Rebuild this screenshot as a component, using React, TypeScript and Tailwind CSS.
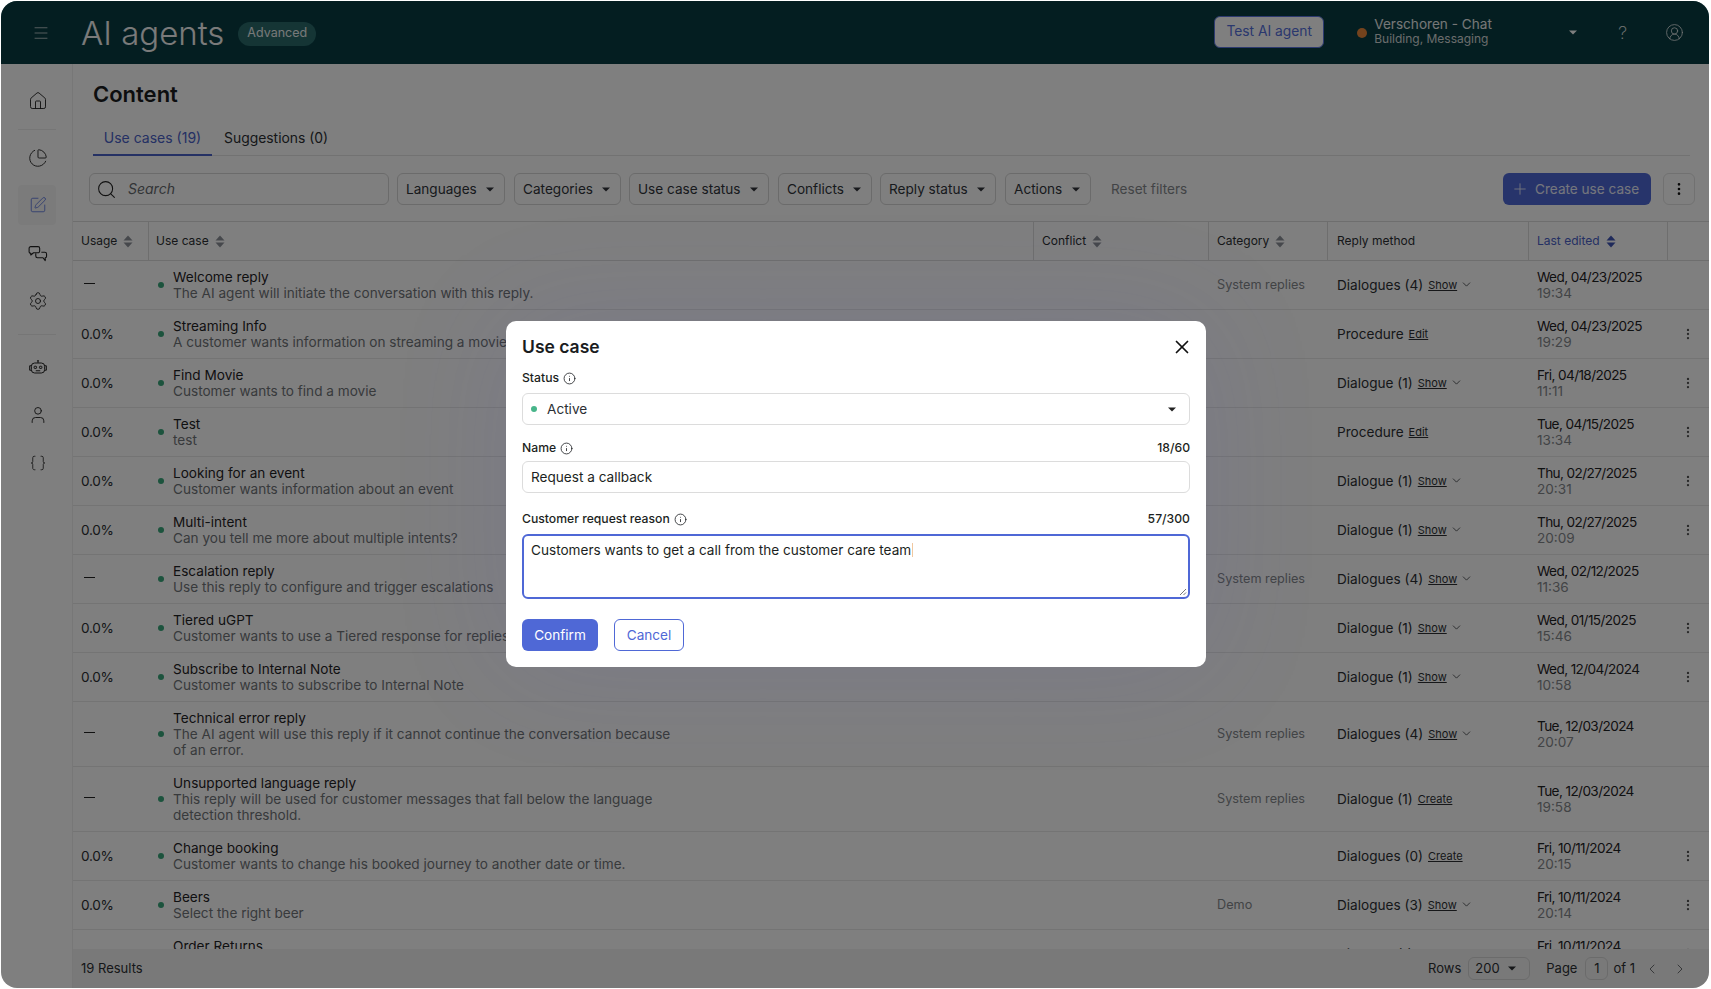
import {
  Braces,
  ChartPie,
  ChevronDown,
  ChevronLeft,
  ChevronRight,
  CircleUserRound,
  EllipsisVertical,
  Home,
  Info,
  Menu,
  Plus,
  Search,
  Settings,
  SquarePen,
  User,
  X,
} from "lucide-react";

type Row = {
  usage: string;
  name: string;
  desc: string;
  desc2?: string;
  category?: string;
  reply: string;
  link: string;
  chevron?: boolean;
  date: string;
  time: string;
  menu?: boolean;
  tall?: boolean;
};

const rows: Row[] = [
  { usage: "—", name: "Welcome reply", desc: "The AI agent will initiate the conversation with this reply.", category: "System replies", reply: "Dialogues (4)", link: "Show", chevron: true, date: "Wed, 04/23/2025", time: "19:34" },
  { usage: "0.0%", name: "Streaming Info", desc: "A customer wants information on streaming a movie", reply: "Procedure", link: "Edit", date: "Wed, 04/23/2025", time: "19:29", menu: true },
  { usage: "0.0%", name: "Find Movie", desc: "Customer wants to find a movie", reply: "Dialogue (1)", link: "Show", chevron: true, date: "Fri, 04/18/2025", time: "11:11", menu: true },
  { usage: "0.0%", name: "Test", desc: "test", reply: "Procedure", link: "Edit", date: "Tue, 04/15/2025", time: "13:34", menu: true },
  { usage: "0.0%", name: "Looking for an event", desc: "Customer wants information about an event", reply: "Dialogue (1)", link: "Show", chevron: true, date: "Thu, 02/27/2025", time: "20:31", menu: true },
  { usage: "0.0%", name: "Multi-intent", desc: "Can you tell me more about multiple intents?", reply: "Dialogue (1)", link: "Show", chevron: true, date: "Thu, 02/27/2025", time: "20:09", menu: true },
  { usage: "—", name: "Escalation reply", desc: "Use this reply to configure and trigger escalations", category: "System replies", reply: "Dialogues (4)", link: "Show", chevron: true, date: "Wed, 02/12/2025", time: "11:36" },
  { usage: "0.0%", name: "Tiered uGPT", desc: "Customer wants to use a Tiered response for replies", reply: "Dialogue (1)", link: "Show", chevron: true, date: "Wed, 01/15/2025", time: "15:46", menu: true },
  { usage: "0.0%", name: "Subscribe to Internal Note", desc: "Customer wants to subscribe to Internal Note", reply: "Dialogue (1)", link: "Show", chevron: true, date: "Wed, 12/04/2024", time: "10:58", menu: true },
  { usage: "—", name: "Technical error reply", desc: "The AI agent will use this reply if it cannot continue the conversation because", desc2: "of an error.", category: "System replies", reply: "Dialogues (4)", link: "Show", chevron: true, date: "Tue, 12/03/2024", time: "20:07", tall: true },
  { usage: "—", name: "Unsupported language reply", desc: "This reply will be used for customer messages that fall below the language", desc2: "detection threshold.", category: "System replies", reply: "Dialogue (1)", link: "Create", date: "Tue, 12/03/2024", time: "19:58", tall: true },
  { usage: "0.0%", name: "Change booking", desc: "Customer wants to change his booked journey to another date or time.", reply: "Dialogues (0)", link: "Create", date: "Fri, 10/11/2024", time: "20:15", menu: true },
  { usage: "0.0%", name: "Beers", desc: "Select the right beer", category: "Demo", reply: "Dialogues (3)", link: "Show", chevron: true, date: "Fri, 10/11/2024", time: "20:14", menu: true },
  { usage: "0.0%", name: "Order Returns", desc: "Customer wants to return an order", reply: "Dialogue (1)", link: "Show", chevron: true, date: "Fri, 10/11/2024", time: "20:10", menu: true },
];

const gridCols = "grid grid-cols-[76px_885px_175px_119px_201px_139px_1fr]";

function Caret({ className = "" }: { className?: string }) {
  return (
    <svg width="8" height="5" viewBox="0 0 8 5" className={className}>
      <path d="M0 0.5h8L4 4.5z" fill="currentColor" />
    </svg>
  );
}

function SortIcon({ active }: { active?: boolean }) {
  return (
    <svg width="10" height="13" viewBox="0 0 10 13" className="ml-[6px]">
      <path d="M5 0.5L9.5 5.5H0.5z" fill={active ? "#3f55b5" : "#8d9199"} />
      <path d="M5 12.5L0.5 7.5H9.5z" fill={active ? "#3f55b5" : "#8d9199"} />
    </svg>
  );
}

function ChatIcon() {
  return (
    <svg width="20" height="20" viewBox="0 0 18 18" fill="none" stroke="#222" strokeWidth="1" strokeLinejoin="round" className="translate-y-[2px]">
      <path d="M2.5 1.5h6.5a1.5 1.5 0 0 1 1.5 1.5v2.5a1.5 1.5 0 0 1-1.5 1.5H5L2.5 9V7.4A1.5 1.5 0 0 1 1 5.5V3a1.5 1.5 0 0 1 1.5-1.5z" />
      <path d="M7 7.5v2.5a1.5 1.5 0 0 0 1.5 1.5h5l2 2.5v-2.5a1.5 1.5 0 0 0 1.2-1.5V8a1.5 1.5 0 0 0-1.5-1.5h-3.2" />
    </svg>
  );
}

function RobotIcon() {
  return (
    <svg width="20" height="20" viewBox="0 0 18 18" fill="none" stroke="#222" strokeWidth="0.9" strokeLinejoin="round">
      <rect x="3" y="4.5" width="12" height="9" rx="3" />
      <path d="M3 7H1.5v4H3M15 7h1.5v4H15M9 4.5V3" />
      <circle cx="9" cy="2.6" r="0.5" />
      <rect x="5.5" y="7.4" width="2.2" height="2" rx="0.6" />
      <rect x="10.3" y="7.4" width="2.2" height="2" rx="0.6" />
      <path d="M7 11.5h4" />
    </svg>
  );
}

function FilterButton({ label, className }: { label: string; className: string }) {
  return (
    <button className={`flex h-8 items-center justify-between rounded-md border border-[#d6d6d6] pl-[8px] pr-[10px] text-[13.6px] text-[#30343a] ${className}`}>
      <span>{label}</span>
      <Caret />
    </button>
  );
}

function SideItem({ children, active }: { children: React.ReactNode; active?: boolean }) {
  return (
    <div className={`flex h-10 w-[38px] items-center justify-center rounded pl-[2px] ${active ? "bg-[#f7f7f7]" : ""}`}>
      {children}
    </div>
  );
}

function TableRow({ row }: { row: Row }) {
  return (
    <div className={`${gridCols} ${row.tall ? "h-[65px]" : "h-[49px]"} items-center border-b border-[#e8e8e8] pb-px text-[13.6px] leading-4 text-[#2c2f33]`}>
      <div className="pl-2 tracking-[-0.3px]">
        {row.usage === "—" ? <div className="mb-[3px] ml-[3px] h-px w-[11px] bg-[#222]" /> : row.usage}
      </div>
      <div className="flex items-center">
        <span className="ml-[9px] h-[6px] w-[6px] rounded-full bg-[#38a77a]" />
        <div className="ml-[9px]">
          <div className="text-[#1f2225]">{row.name}</div>
          <div className="text-[#707478]">{row.desc}</div>
          {row.desc2 && <div className="text-[#707478]">{row.desc2}</div>}
        </div>
      </div>
      <div />
      <div className="pl-[8px] text-[12.7px] text-[#85888c]">{row.category}</div>
      <div className="flex items-center pl-[9px]">
        <span>{row.reply}</span>
        <span className="ml-[5px] text-[11px] underline">{row.link}</span>
        {row.chevron && <ChevronDown size={13} strokeWidth={1.4} className="ml-[3px]" />}
      </div>
      <div className="pl-[8px]">
        <div className="tracking-[-0.6px] text-[#1f2225]">{row.date}</div>
        <div className="text-[#85888c]">{row.time}</div>
      </div>
      <div className="flex justify-center pr-[2px]">
        {row.menu && <EllipsisVertical size={14} color="#555" />}
      </div>
    </div>
  );
}

function FieldLabel({ label, count }: { label: string; count?: string }) {
  return (
    <div className="flex h-4 items-center justify-between text-[12.2px] font-medium text-[#1c1f22]">
      <span className="flex items-center gap-[4px]">
        {label}
        <Info size={13} strokeWidth={1.5} />
      </span>
      {count && <span>{count}</span>}
    </div>
  );
}

export default function App() {
  return (
    <div className="h-[989px] w-[1711px] overflow-hidden bg-white pb-px pl-px pr-[2px] pt-px font-['Inter',sans-serif]">
      <div className="relative flex h-full flex-col overflow-hidden rounded-2xl">
        {/* Top bar */}
        <header className="flex h-[63px] shrink-0 items-center bg-[#083d43] text-white">
          <Menu size={18} strokeWidth={1} className="ml-[31px] text-[#dfe3e4]" />
          <h1 className="ml-[31px] mt-[2px] text-[33px] font-light leading-none text-[#f5f5f5]">AI agents</h1>
          <span className="ml-[14px] mt-[2px] flex h-6 w-[78px] items-center justify-center rounded-full bg-[#2a6a6b] text-[12.5px] text-[#eef2f2]">Advanced</span>
          <div className="mb-[2px] ml-auto flex h-[32px] w-[110px] items-center justify-center rounded-md border border-[#5a75e0] bg-white text-[13.8px] text-[#5570dc]">
            Test AI agent
          </div>
          <span className="ml-[33px] h-[10px] w-[10px] rounded-full bg-[#e9863a]" />
          <div className="ml-[7px] w-[195px] leading-none">
            <div className="text-[13.6px] text-[#eceeee]">Verschoren - Chat</div>
            <div className="-mt-[1px] text-xs text-[#d5d9d9]">Building, Messaging</div>
          </div>
          <Caret className="text-white" />
          <span className="ml-[41px] text-lg font-extralight leading-none text-[#eceeee]">?</span>
          <CircleUserRound size={19} strokeWidth={1} className="ml-[38px] mr-[25px] text-[#eceeee]" />
        </header>

        <div className="flex min-h-0 flex-1 bg-white">
          {/* Sidebar */}
          <aside className="flex w-[72px] shrink-0 flex-col items-center border-r border-[#eeeeee] bg-[#ffffff] pt-[17px]">
            <SideItem><Home size={20} strokeWidth={1.1} color="#222" /></SideItem>
            <div className="my-[8px] h-px w-[38px] bg-[#ececec]" />
            <SideItem><ChartPie size={20} strokeWidth={1.1} color="#222" /></SideItem>
            <div className="mt-[7px]" />
            <SideItem active><SquarePen size={18} strokeWidth={1.1} color="#5570dc" /></SideItem>
            <div className="mt-2" />
            <SideItem><ChatIcon /></SideItem>
            <div className="mt-2" />
            <SideItem><Settings size={20} strokeWidth={1.1} color="#222" /></SideItem>
            <div className="my-[13px] h-px w-[38px] bg-[#ececec]" />
            <SideItem><RobotIcon /></SideItem>
            <div className="mt-[7px]" />
            <SideItem><User size={20} strokeWidth={1.1} color="#222" /></SideItem>
            <div className="mt-2" />
            <SideItem><Braces size={18} strokeWidth={1.1} color="#222" /></SideItem>
          </aside>

          {/* Content */}
          <main className="flex min-w-0 flex-1 flex-col">
            <h2 className="ml-5 mt-4 text-[22px] font-semibold leading-7 text-[#1a1c1e]">Content</h2>
            <div className="ml-5 mr-[19px] mt-[10px] flex h-[38px] border-b border-[#e4e4e4] text-sm">
              <div className="flex h-[38px] w-[119px] items-center justify-center border-b-2 border-[#4a62c8] pt-[3px] text-[#4a62c8]">Use cases (19)</div>
              <div className="ml-[12px] flex h-[37px] items-center pt-[4px] text-[13.9px] text-[#2c2f33]">Suggestions (0)</div>
            </div>

            <div className="ml-4 mr-[14px] mt-[17px] flex h-8 items-center">
              <div className="flex h-8 w-[300px] items-center rounded-md border border-[#d6d6d6] pl-[6px] text-sm">
                <Search size={21} strokeWidth={1.2} color="#222" />
                <span className="ml-[11px] italic text-[#666a6e]">Search</span>
              </div>
              <FilterButton label="Languages" className="ml-2 w-[108px]" />
              <FilterButton label="Categories" className="ml-[9px] w-[107px]" />
              <FilterButton label="Use case status" className="ml-2 w-[140px]" />
              <FilterButton label="Conflicts" className="ml-[9px] w-[94px]" />
              <FilterButton label="Reply status" className="ml-2 w-[116px]" />
              <FilterButton label="Actions" className="ml-[9px] w-[86px]" />
              <span className="ml-5 text-[13.6px] text-[#85888c]">Reset filters</span>
              <button className="ml-auto flex h-8 w-[148px] items-center rounded-md bg-[#4f68d6] pl-[8px] text-[13.6px] text-[#e9ecfa]">
                <Plus size={18} strokeWidth={1.2} />
                <span className="ml-[6px]">Create use case</span>
              </button>
              <button className="ml-3 flex h-8 w-8 items-center justify-center rounded-md border border-[#e2e2e2]">
                <EllipsisVertical size={16} color="#111" />
              </button>
            </div>

            {/* Table */}
            <div className={`${gridCols} mt-4 h-10 shrink-0 border-y border-[#dcdcdc] text-xs text-[#2c2f33]`}>
              <div className="flex items-center border-r border-[#dcdcdc] pl-2">Usage<SortIcon /></div>
              <div className="flex items-center border-r border-[#dcdcdc] pl-[7px]">Use case<SortIcon /></div>
              <div className="flex items-center border-r border-[#dcdcdc] pl-2">Conflict<SortIcon /></div>
              <div className="flex items-center border-r border-[#dcdcdc] pl-2">Category<SortIcon /></div>
              <div className="flex items-center border-r border-[#dcdcdc] pl-[9px]">Reply method</div>
              <div className="flex items-center border-r border-[#dcdcdc] pl-2 text-[#4a62c8]">Last edited<SortIcon active /></div>
              <div />
            </div>
            <div className="min-h-0 flex-1 overflow-hidden">
              {rows.map((row) => (
                <TableRow key={row.name} row={row} />
              ))}
            </div>

            {/* Pagination */}
            <footer className="flex h-[39px] shrink-0 items-center bg-[#f3f3f3] pl-2 text-[13px] text-[#2c2f33]">
              <span>19 Results</span>
              <span className="ml-auto">Rows</span>
              <div className="ml-[7px] flex h-[23px] w-[62px] items-center justify-between rounded-md border border-[#d6d6d6] pl-[6px] pr-[13px]">
                200
                <Caret />
              </div>
              <span className="ml-4">Page</span>
              <div className="ml-2 flex h-[23px] w-[23px] items-center justify-center rounded-md border border-[#d6d6d6]">1</div>
              <span className="ml-[5px]">of 1</span>
              <ChevronLeft size={16} strokeWidth={1} className="ml-[9px]" />
              <ChevronRight size={16} strokeWidth={1} className="ml-3 mr-[21px]" />
            </footer>
          </main>
        </div>

        {/* Dialog */}
        <div className="absolute inset-0 flex items-start justify-center bg-black/50 pt-[320px]">
          <div className="h-[346px] w-[700px] translate-x-[1px] rounded-[10px] bg-white p-4 shadow-[0_0_120px_rgba(80,80,200,0.12)]">
            <div className="flex h-[20px] items-center justify-between">
              <h3 className="text-[17.5px] font-semibold text-[#1a1c1e]">Use case</h3>
              <X size={22} strokeWidth={1.9} color="#111" className="mr-[-3px]" />
            </div>
            <div className="mt-[13px]"><FieldLabel label="Status" /></div>
            <div className="mt-[7px] flex h-8 items-center rounded-md border border-[#dcdcdc] pl-2 pr-[13px] text-[13.6px] text-[#2c2f33]">
              <span className="h-[6px] w-[6px] rounded-full bg-[#48b58a]" />
              <span className="ml-[10px]">Active</span>
              <Caret className="ml-auto text-[#222]" />
            </div>
            <div className="mt-[15px]"><FieldLabel label="Name" count="18/60" /></div>
            <div className="mt-[5px] flex h-8 items-center rounded-md border border-[#dcdcdc] pl-2 text-[13.6px] text-[#1c1f22]">Request a callback</div>
            <div className="mt-[18px]"><FieldLabel label="Customer request reason" count="57/300" /></div>
            <div className="relative mt-[7px] h-[65px] rounded-md border-2 border-[#4f68d6] px-[7px] py-[4px] text-[13.6px] text-[#1c1f22]">
              <span>Customers wants to get a call from the customer care team</span>
              <span className="ml-px inline-block h-[14px] w-px translate-y-[2px] bg-[#f0c8a0]" />
              <svg width="8" height="8" viewBox="0 0 8 8" className="absolute bottom-[1px] right-[1px]">
                <path d="M1 7L7 1M4.5 7L7 4.5" stroke="#555" strokeWidth="0.8" />
              </svg>
            </div>
            <div className="mt-[20px] flex">
              <button className="h-8 w-[76px] rounded-md bg-[#4f68d6] text-[13.6px] text-white">Confirm</button>
              <button className="ml-4 h-8 w-[70px] rounded-md border border-[#4f68d6] text-[13.6px] text-[#4f68d6]">Cancel</button>
            </div>
          </div>
        </div>
      </div>
    </div>
  );
}
